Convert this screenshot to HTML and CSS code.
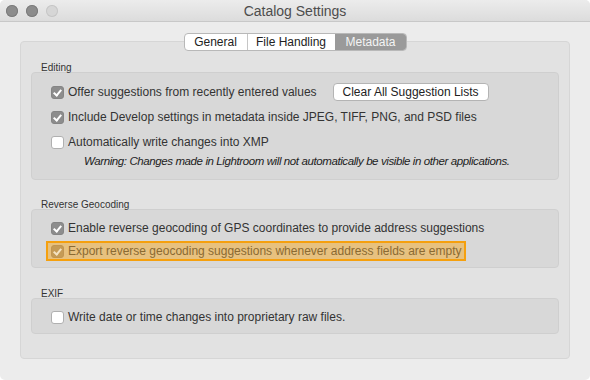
FILE: index.html
```html
<!DOCTYPE html>
<html lang="en">
<head>
  <meta charset="UTF-8">
  <title>Catalog Settings</title>
  <link rel="stylesheet" href="styles.css">
</head>
<body>
  <div class="window">
    <div class="titlebar">
      <div class="lights">
        <span class="light"></span>
        <span class="light"></span>
        <span class="light off"></span>
      </div>
      <div class="title">Catalog Settings</div>
    </div>

    <div class="content">
      <div class="tabs">
        <span class="tab general">General</span>
        <span class="tab files">File Handling</span>
        <span class="tab meta active">Metadata</span>
      </div>

      <div class="panel">
        <div class="group-label">Editing</div>
        <div class="group editing">
          <div class="row">
            <span class="check on"></span>
            <span>Offer suggestions from recently entered values</span>
            <span class="button">Clear All Suggestion Lists</span>
          </div>
          <div class="row">
            <span class="check on"></span>
            <span>Include Develop settings in metadata inside JPEG, TIFF, PNG, and PSD files</span>
          </div>
          <div class="row">
            <span class="check"></span>
            <span>Automatically write changes into XMP</span>
          </div>
          <div class="warning">Warning: Changes made in Lightroom will not automatically be visible in other applications.</div>
        </div>

        <div class="group-label">Reverse Geocoding</div>
        <div class="group geo">
          <div class="row">
            <span class="check on"></span>
            <span>Enable reverse geocoding of GPS coordinates to provide address suggestions</span>
          </div>
          <div class="row highlight">
            <span class="check on"></span>
            <span>Export reverse geocoding suggestions whenever address fields are empty</span>
          </div>
        </div>

        <div class="group-label">EXIF</div>
        <div class="group exif">
          <div class="row">
            <span class="check"></span>
            <span>Write date or time changes into proprietary raw files.</span>
          </div>
        </div>
      </div>
    </div>
  </div>
</body>
</html>
```

FILE: styles.css
```css
body {
  margin: 0;
  background: #ffffff;
  font-family: "Liberation Sans", Arial, sans-serif;
  color: #333333;
}
.window {
  width: 590px;
  height: 380px;
  background: #ececec;
  border-radius: 5px;
  overflow: hidden;
}
.titlebar {
  height: 21px;
  border-bottom: 1px solid #c8c8c8;
  background: linear-gradient(to bottom, #ececec, #dcdcdc);
  display: flex;
  align-items: center;
  position: relative;
}
.lights {
  display: flex;
  gap: 8px;
  padding-left: 6px;
}
.light {
  width: 12px;
  height: 12px;
  border-radius: 50%;
  background: #8c8c8c;
  box-shadow: inset 0 0 0 1px #7c7c7c;
}
.light.off {
  background: #d6d6d6;
  box-shadow: inset 0 0 0 1px #c6c6c6;
}
.title {
  position: absolute;
  left: 0;
  right: 0;
  text-align: center;
  font-size: 14px;
  color: #4d4d4d;
}
.content {
  padding: 11px 20px 0 20px;
  position: relative;
}
.tabs {
  display: flex;
  width: max-content;
  margin: 0 auto;
  position: relative;
  z-index: 1;
  border: 1px solid #b8b8b8;
  border-radius: 4px;
  background: #ffffff;
  overflow: hidden;
  height: 16px;
}
.tab {
  font-size: 12px;
  color: #222222;
  line-height: 16px;
  text-align: center;
  border-left: 1px solid #c6c6c6;
}
.tab.general {
  width: 62px;
  border-left: none;
}
.tab.files {
  width: 87px;
}
.tab.meta {
  width: 70px;
}
.tab.active {
  background: #9a9a9a;
  color: #f4f4f4;
  border-left-color: #9a9a9a;
}
.panel {
  box-sizing: border-box;
  margin-top: -10px;
  height: 318px;
  background: #e2e2e2;
  border: 1px solid #d6d6d6;
  border-radius: 4px;
  padding: 18px 10px 0 10px;
}
.group-label {
  font-size: 10px;
  line-height: 15px;
  height: 12px;
  color: #333333;
  padding-left: 10px;
}
.group {
  box-sizing: border-box;
  background: #d8d8d8;
  border: 1px solid #cfcfcf;
  border-radius: 4px;
  padding: 6px 0 0 19px;
  margin-bottom: 17px;
}
.group.editing {
  height: 108px;
}
.group.geo {
  height: 59px;
  margin-bottom: 18px;
}
.group.exif {
  height: 36px;
}
.row {
  display: flex;
  align-items: center;
  height: 24px;
  margin-bottom: 1px;
  font-size: 12px;
  color: #333333;
  white-space: nowrap;
}
.group.editing .row:first-child {
  margin-top: 1px;
}
.check {
  box-sizing: border-box;
  width: 13px;
  height: 13px;
  border-radius: 3px;
  background: #ffffff;
  border: 1px solid #b0b0b0;
  margin-right: 4px;
  flex-shrink: 0;
  position: relative;
}
.check.on {
  background: #8d8d8d;
  border-color: #858585;
}
.check.on::after {
  content: "";
  position: absolute;
  left: 3px;
  top: 1px;
  width: 3px;
  height: 6px;
  border: solid #ffffff;
  border-width: 0 2px 2px 0;
  transform: rotate(40deg);
}
.button {
  box-sizing: border-box;
  margin-left: 16px;
  height: 18px;
  line-height: 16px;
  width: 156px;
  text-align: center;
  background: #ffffff;
  border: 1px solid #b4b4b4;
  border-radius: 4px;
  font-size: 12px;
  color: #222222;
}
.warning {
  font-style: italic;
  font-size: 11.5px;
  line-height: 12px;
  color: #222222;
  padding-left: 33px;
  letter-spacing: -0.4px;
}
.row.highlight {
  box-sizing: border-box;
  margin-left: -5px;
  width: 420px;
  height: 20px;
  padding-left: 3px;
  border: 2px solid #f5a00e;
  background: #e7c17f;
  color: #8a6a32;
}
.highlight .check.on {
  background: #c59b56;
  border-color: #c09552;
}
.highlight .check.on::after {
  border-color: #f3e2c2;
}
```
